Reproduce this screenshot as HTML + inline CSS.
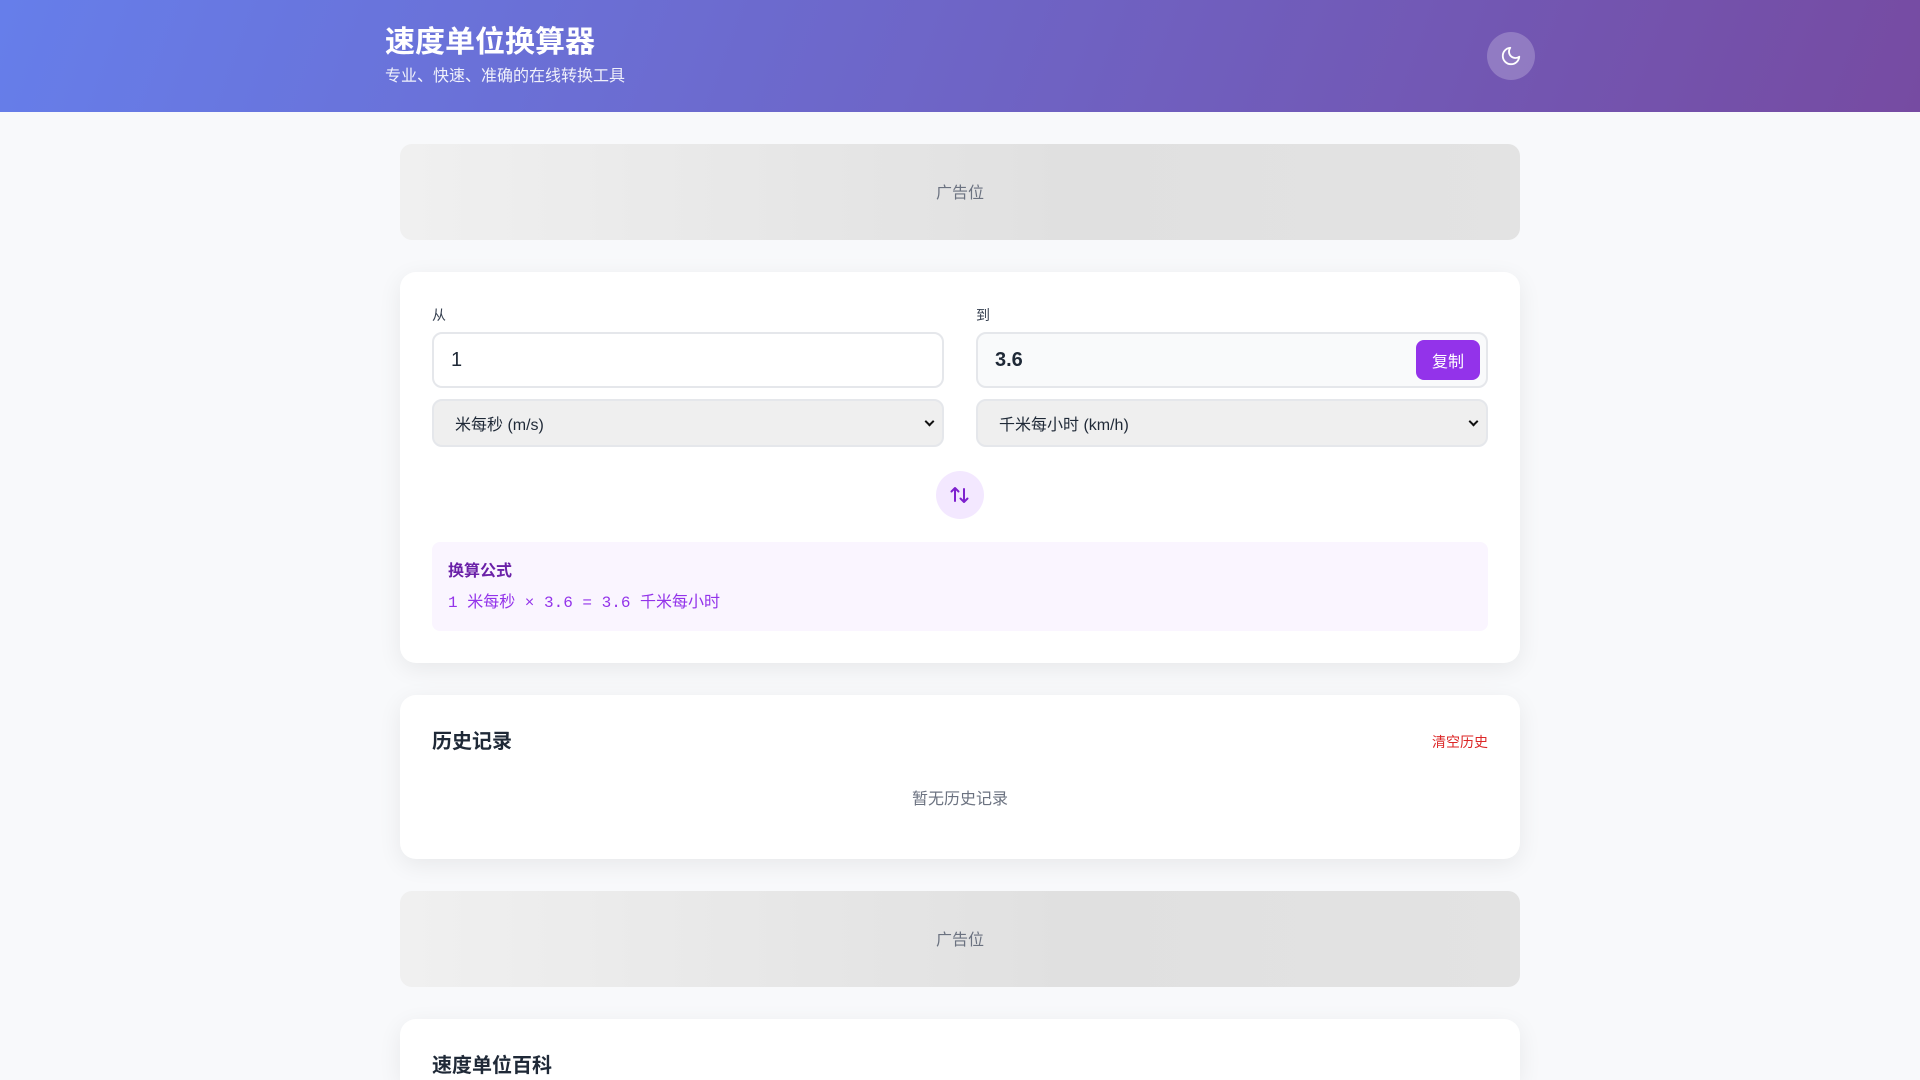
<!DOCTYPE html>
<html><head><meta charset="utf-8"><style>
*{box-sizing:border-box;margin:0;padding:0}
html,body{width:1920px;height:1080px;overflow:hidden}
body{background:#f8f9fb;font-family:"Liberation Sans","Noto Sans CJK SC",sans-serif;color:#1f2937;position:relative}
.hdr{height:112px;background:linear-gradient(110deg,#667eea 0%,#764ba2 100%);position:relative;color:#fff}
.hdr h1{position:absolute;left:385px;top:23px;font-size:30px;font-weight:700;line-height:40px}
.hdr p{position:absolute;left:385px;top:66px;font-size:16px;line-height:22px;opacity:.9}
.moon{position:absolute;left:1487px;top:32px;width:48px;height:48px;border-radius:50%;background:rgba(255,255,255,.22);display:flex;align-items:center;justify-content:center}
.ad{position:absolute;left:400px;width:1120px;height:96px;border-radius:12px;background:linear-gradient(90deg,#f0f0f0,#e0e0e0 60%,#e3e3e3);color:#6b7280;font-size:16px;display:flex;align-items:center;justify-content:center;padding-bottom:3px}
.card{position:absolute;left:400px;width:1120px;background:#fff;border-radius:16px;box-shadow:0 6px 24px rgba(0,0,0,.07)}
.lbl{position:absolute;font-size:14px;color:#374151;top:33px}
.inp{position:absolute;top:60px;height:56px;width:512px;border:2px solid #e5e7eb;border-radius:10px;font-size:20px;padding-left:17px;display:flex;align-items:center}
.sel{position:absolute;top:127px;height:48px;width:512px;border:2px solid #e5e7eb;border-radius:10px;background:#efefef;font-size:16px;padding-left:21px;display:flex;align-items:center}
.sel:after{content:"";position:absolute;right:9px;top:17px;width:5px;height:5px;border-right:2px solid #111;border-bottom:2px solid #111;transform:rotate(45deg)}
.copy{position:absolute;right:6px;top:6px;width:64px;height:40px;border-radius:8px;background:#9333ea;color:#fff;font-size:16px;font-weight:400;display:flex;align-items:center;justify-content:center}
.swap{position:absolute;left:536px;top:199px;width:48px;height:48px;border-radius:50%;background:#f3e8ff;display:flex;align-items:center;justify-content:center}
.formula{position:absolute;left:32px;top:270px;width:1056px;height:89px;background:#faf5ff;border-radius:8px}
</style></head><body>
<div class="hdr"><h1>速度单位换算器</h1><p>专业、快速、准确的在线转换工具</p>
<div class="moon"><svg width="22" height="22" viewBox="0 0 24 24" fill="none" stroke="#fff" stroke-width="2" stroke-linecap="round" stroke-linejoin="round"><path d="M21 12.8A9 9 0 1 1 11.2 3a7 7 0 0 0 9.8 9.8z"/></svg></div></div>
<div class="ad" style="top:144px">广告位</div>
<div class="card" style="top:272px;height:391px">
<div class="lbl" style="left:32px">从</div><div class="lbl" style="left:576px">到</div>
<div class="inp" style="left:32px;background:#fff">1</div>
<div class="inp" style="left:576px;background:#f9fafb;font-weight:700">3.6<div class="copy">复制</div></div>
<div class="sel" style="left:32px">米每秒 (m/s)</div>
<div class="sel" style="left:576px">千米每小时 (km/h)</div>
<div class="swap"><svg width="24" height="24" viewBox="0 0 24 24" fill="none" stroke="#7e22ce" stroke-width="2" stroke-linecap="round" stroke-linejoin="round"><path d="M7 18V5M3.5 8.5L7 5l3.5 3.5M16 6v13M12.5 15.5L16 19l3.5-3.5"/></svg></div>
<div class="formula"><div style="position:absolute;left:16px;top:15px;font-size:16px;font-weight:700;color:#6b21a8">换算公式</div>
<div style="position:absolute;left:16px;top:46px;font-size:16px;color:#9333ea;font-family:'Liberation Mono','Noto Sans CJK SC',monospace">1 米每秒 × 3.6 = 3.6 千米每小时</div></div>
</div>
<div class="card" style="top:695px;height:164px">
<div style="position:absolute;left:32px;top:30px;font-size:20px;font-weight:700">历史记录</div>
<div style="position:absolute;right:32px;top:37px;font-size:14px;color:#dc2626">清空历史</div>
<div style="position:absolute;left:0;right:0;top:90px;text-align:center;font-size:16px;color:#6b7280">暂无历史记录</div>
</div>
<div class="ad" style="top:891px">广告位</div>
<div class="card" style="top:1019px;height:61px;border-radius:16px 16px 0 0">
<div style="position:absolute;left:32px;top:30px;font-size:20px;font-weight:700">速度单位百科</div></div>
</body></html>
